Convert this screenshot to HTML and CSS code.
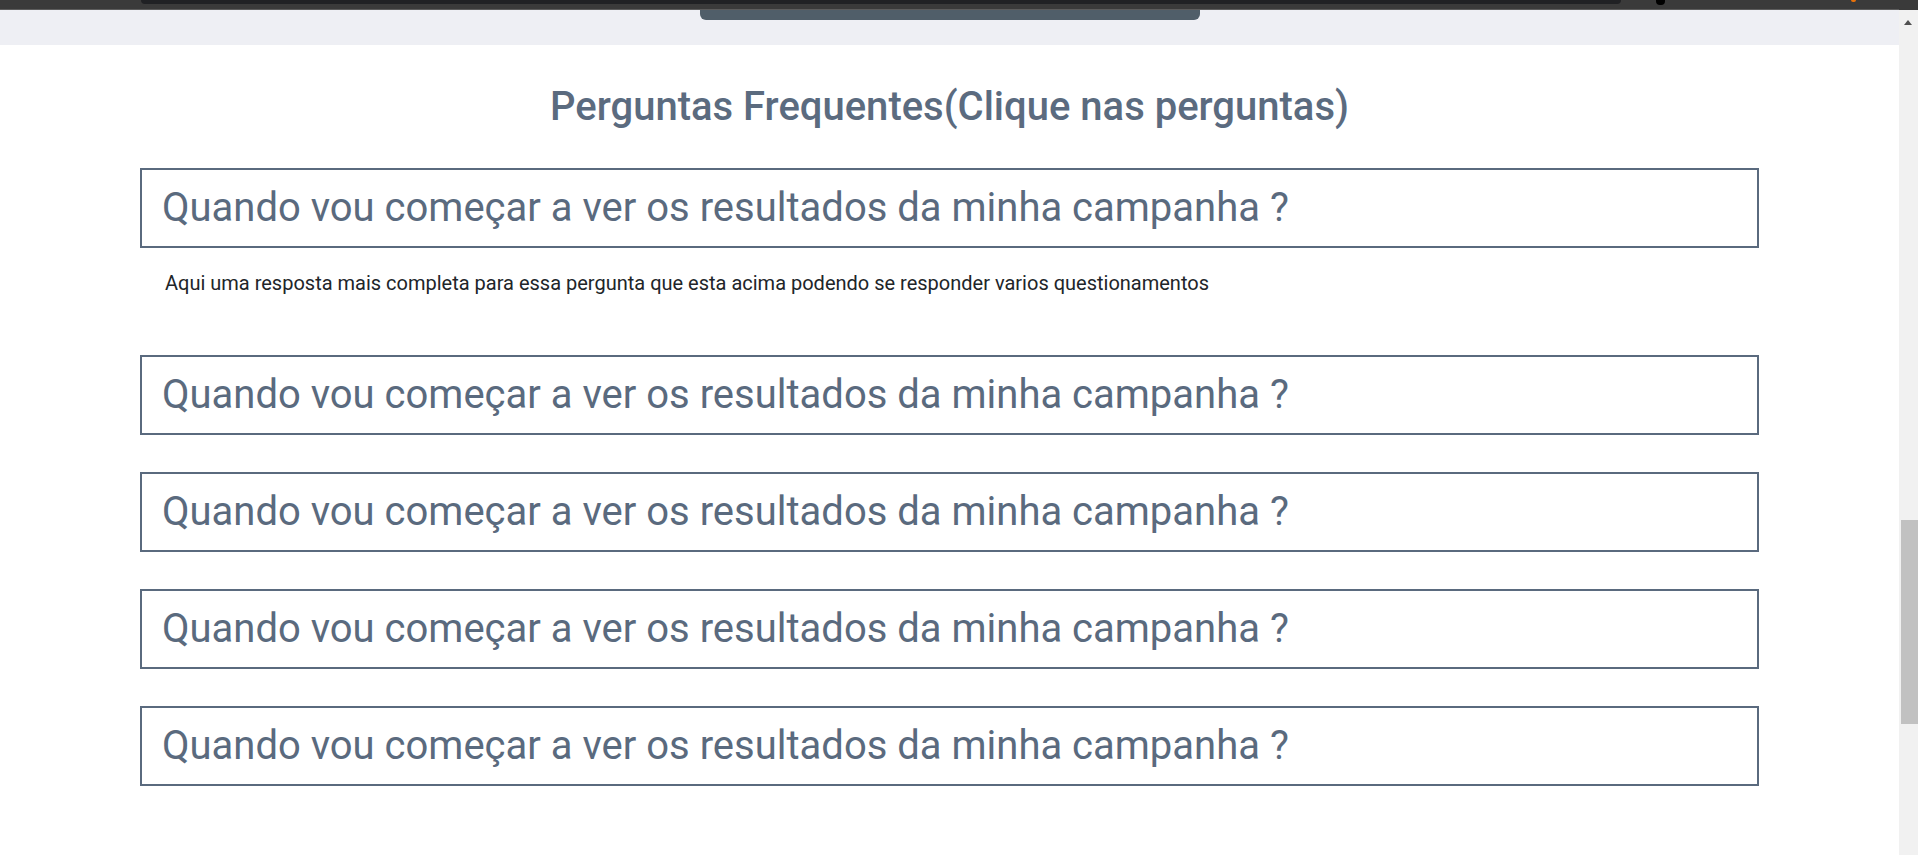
FILE: index.html
```html
<!DOCTYPE html>
<html lang="pt-BR">
<head>
<meta charset="utf-8">
<title>Perguntas Frequentes</title>
<link rel="stylesheet" href="styles.css">
</head>
<body>
<div class="window">
  <div class="page">
    <div class="topbar">
      <div class="topbar-inner"></div>
      <div class="topbar-dot"></div>
      <div class="topbar-orange"></div>
    </div>
    <div class="band">
      <div class="pill"></div>
    </div>
    <section class="faq">
      <h2 class="faq-title">Perguntas Frequentes(Clique nas perguntas)</h2>
      <div class="faq-list">
        <div class="faq-item open">
          <div class="question">Quando vou começar a ver os resultados da minha campanha ?</div>
          <p class="answer">Aqui uma resposta mais completa para essa pergunta que esta acima podendo se responder varios questionamentos</p>
        </div>
        <div class="faq-item">
          <div class="question">Quando vou começar a ver os resultados da minha campanha ?</div>
        </div>
        <div class="faq-item">
          <div class="question">Quando vou começar a ver os resultados da minha campanha ?</div>
        </div>
        <div class="faq-item">
          <div class="question">Quando vou começar a ver os resultados da minha campanha ?</div>
        </div>
        <div class="faq-item">
          <div class="question">Quando vou começar a ver os resultados da minha campanha ?</div>
        </div>
      </div>
    </section>
  </div>
  <div class="scrollbar">
    <div class="scroll-top"></div>
    <div class="scroll-track">
      <div class="scroll-arrow"></div>
      <div class="scroll-thumb"></div>
    </div>
  </div>
</div>
</body>
</html>
```
FILE: styles.css
```css
html, body {
  margin: 0;
  padding: 0;
  height: 100%;
  overflow: hidden;
  background: #ffffff;
  font-family: Roboto, "Liberation Sans", Arial, sans-serif;
}

.window {
  display: flex;
  height: 855px;
}

.page {
  flex: 1;
  display: flex;
  flex-direction: column;
  min-width: 0;
}

.topbar {
  position: relative;
  height: 9px;
  background: #3a3a3a;
  border-bottom: 1px solid #5c5c5c;
}

.topbar-inner {
  position: absolute;
  left: 141px;
  width: 1480px;
  top: 0;
  height: 4px;
  background: #202124;
  border-radius: 0 0 12px 12px;
}

.topbar-dot {
  position: absolute;
  left: 1656px;
  top: 0;
  width: 9px;
  height: 5px;
  background: #000;
  border-radius: 0 0 4px 4px;
}

.topbar-orange {
  position: absolute;
  left: 1851px;
  top: 0;
  width: 5px;
  height: 2px;
  background: #e8710a;
  border-radius: 0 0 3px 3px;
}

.band {
  position: relative;
  height: 35px;
  background: #eeeff4;
}

.pill {
  position: absolute;
  left: 700px;
  top: 0;
  width: 500px;
  height: 10px;
  background: #505e69;
  border-radius: 0 0 6px 6px;
}

.faq {
  display: flex;
  flex-direction: column;
  align-items: center;
}

.faq-title {
  margin: 42px 0 0;
  font-size: 40px;
  line-height: 40px;
  font-weight: 500;
  color: #5b6b7f;
  text-align: center;
}

.faq-list {
  width: 1619px;
  margin-top: 41px;
  display: flex;
  flex-direction: column;
  gap: 37px;
}

.question {
  box-sizing: border-box;
  height: 80px;
  border: 2px solid #5a6a7e;
  padding: 0 20px;
  font-size: 40px;
  line-height: 76px;
  font-weight: 400;
  color: #5a6a7e;
  white-space: nowrap;
  cursor: pointer;
}

.answer {
  margin: 20px 0 20px;
  padding-left: 25px;
  font-size: 20px;
  line-height: 30px;
  color: #212529;
}

.scrollbar {
  width: 19px;
  display: flex;
  flex-direction: column;
}

.scroll-top {
  height: 10px;
  background: #3a3a3a;
}

.scroll-track {
  position: relative;
  flex: 1;
  background: #f1f1f1;
}

.scroll-arrow {
  position: absolute;
  left: 5px;
  top: 10px;
  width: 0;
  height: 0;
  border-left: 4px solid transparent;
  border-right: 4px solid transparent;
  border-bottom: 5px solid #505050;
}

.scroll-thumb {
  position: absolute;
  left: 2px;
  right: 0;
  top: 510px;
  height: 204px;
  background: #c1c1c1;
}
```
